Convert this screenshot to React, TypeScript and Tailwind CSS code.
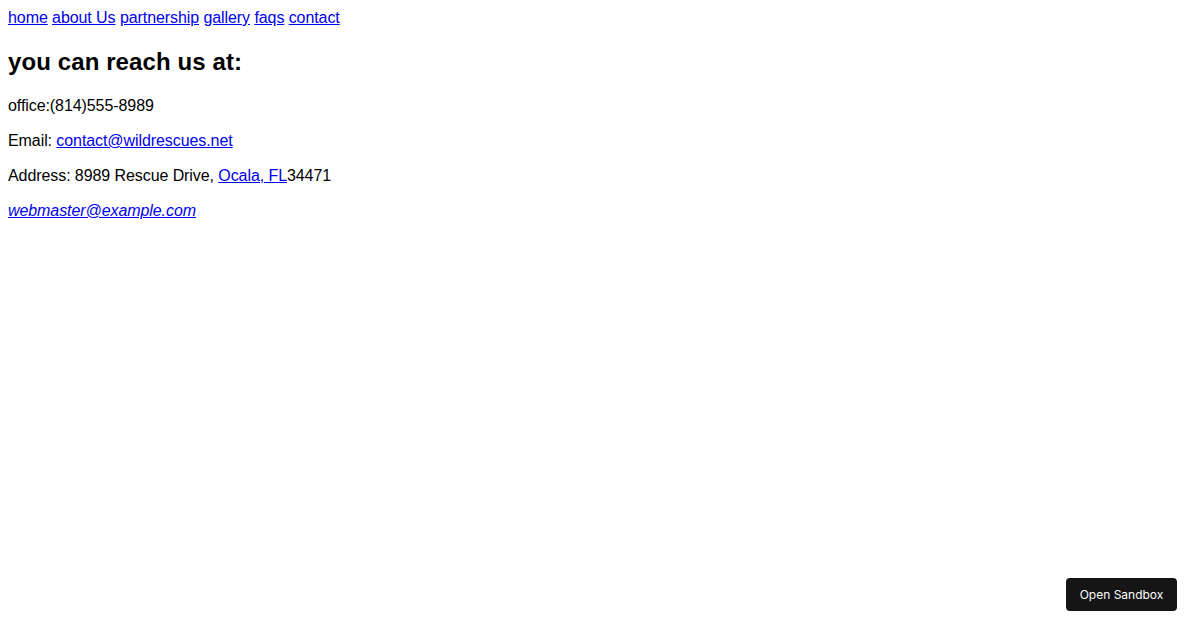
import React from "react";

export default function App() {
  const link = "text-[#0000ee] underline";
  return (
    <div className="min-h-[630px] bg-white p-2 text-black text-[16px] leading-[19px] tracking-[-0.08px]" style={{ fontFamily: '"Liberation Sans", Arial, sans-serif' }}>
      <nav>
        <a href="#" className={link}>home</a>{" "}
        <a href="#" className={link}>about Us</a>{" "}
        <a href="#" className={link}>partnership</a>{" "}
        <a href="#" className={link}>gallery</a>{" "}
        <a href="#" className={link}>faqs</a>{" "}
        <a href="#" className={link}>contact</a>
      </nav>
      <h2 className="text-[24px] font-bold mt-[21px] mb-[20px] leading-[28px] tracking-[0.1px]">you can reach us at:</h2>
      <p className="my-4">office:(814)555-8989</p>
      <p className="my-4">
        Email: <a href="#" className={link}>contact@wildrescues.net</a>
      </p>
      <p className="my-4">
        Address: 8989 Rescue Drive, <a href="#" className={link}>Ocala, FL</a>34471
      </p>
      <address className="italic">
        <a href="#" className={link}>webmaster@example.com</a>
      </address>
      <button
        className="fixed right-[23px] bottom-[19px] w-[111px] h-[33px] rounded-[4px] bg-[#151515] text-white text-[12px] leading-normal tracking-normal flex items-center justify-center"
        style={{ fontFamily: 'Inter, "Liberation Sans", sans-serif' }}
      >
        Open Sandbox
      </button>
    </div>
  );
}
